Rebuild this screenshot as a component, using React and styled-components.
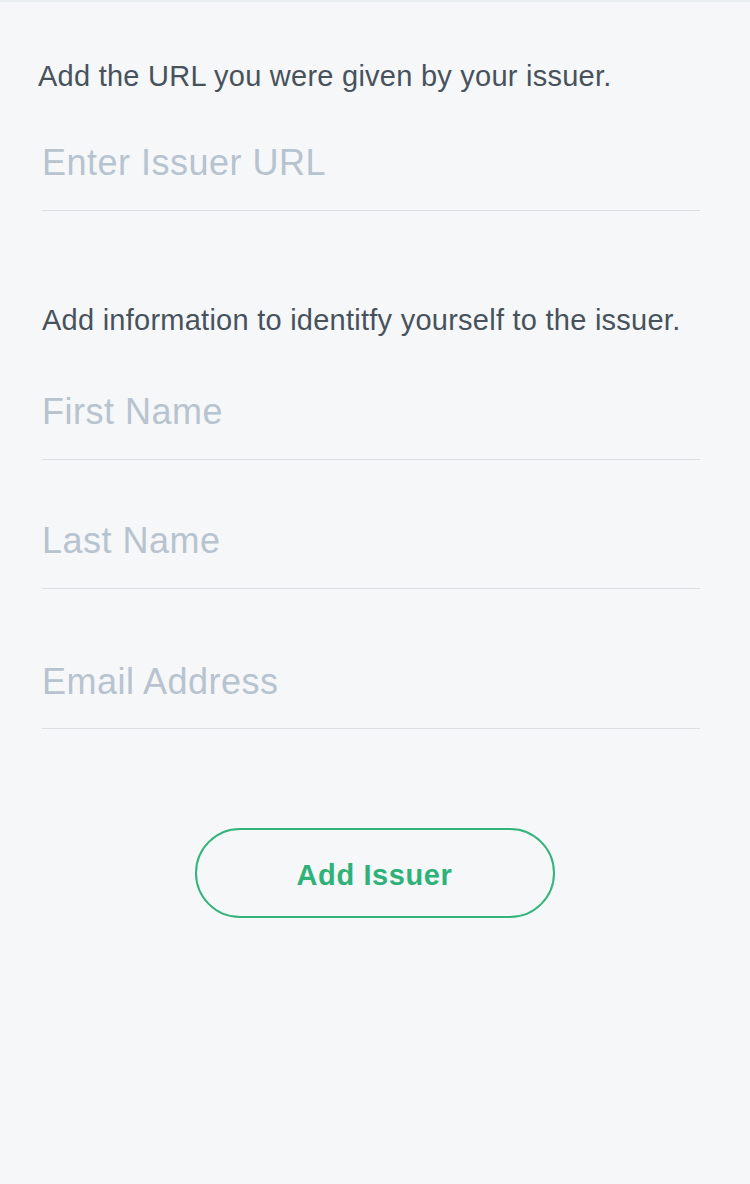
import React from "react";
import styled, { createGlobalStyle } from "styled-components";

const GlobalStyle = createGlobalStyle`
  html, body {
    margin: 0;
    padding: 0;
    background-color: #f6f7f9;
  }
  body {
    font-family: "Liberation Sans", Arial, sans-serif;
  }
`;

const Page = styled.div`
  min-height: 1184px;
  box-sizing: border-box;
  border-top: 2px solid #e9eef0;
  background-color: #f6f7f9;
  padding: 0 50px 0 42px;
`;

const Section = styled.section`
  display: flex;
  flex-direction: column;
  padding-top: ${props => props.top}px;
`;

const Label = styled.p`
  margin: 0 0 0 ${props => props.indent || 0}px;
  font-size: 29px;
  line-height: 34px;
  color: #47525c;
  letter-spacing: 0.25px;
`;

const Input = styled.input`
  display: block;
  width: 100%;
  box-sizing: border-box;
  margin-top: ${props => props.gap}px;
  padding: 0 0 ${props => props.under}px 0;
  border: 0;
  border-bottom: 1.5px solid #dcdfe2;
  background: transparent;
  font-family: "Liberation Sans", Arial, sans-serif;
  font-size: 36px;
  line-height: 40px;
  letter-spacing: 0.5px;
  color: #47525c;
  outline: none;
  &::placeholder {
    color: #b7c3ce;
  }
`;

const ButtonRow = styled.div`
  display: flex;
  justify-content: center;
  padding: 99px 0 0 7px;
`;

const Button = styled.button`
  box-sizing: border-box;
  width: 360px;
  height: 90px;
  padding: 4px 0 0;
  border: 2px solid #34b47d;
  border-radius: 45px;
  background: transparent;
  color: #2fb27a;
  font-family: "Liberation Sans", Arial, sans-serif;
  font-weight: bold;
  font-size: 29px;
  letter-spacing: 0.6px;
  cursor: pointer;
`;

export default function App() {
  return (
    <>
      <GlobalStyle />
      <Page>
        <Section top={57}>
          <Label indent={-4}>Add the URL you were given by your issuer.</Label>
          <Input type="text" placeholder="Enter Issuer URL" gap={50} under={27} />
        </Section>
        <Section top={92}>
          <Label>Add information to identitfy yourself to the issuer.</Label>
          <Input type="text" placeholder="First Name" gap={55} under={27} />
          <Input type="text" placeholder="Last Name" gap={61} under={27} />
          <Input type="email" placeholder="Email Address" gap={73} under={26} />
        </Section>
        <ButtonRow>
          <Button>Add Issuer</Button>
        </ButtonRow>
      </Page>
    </>
  );
}
